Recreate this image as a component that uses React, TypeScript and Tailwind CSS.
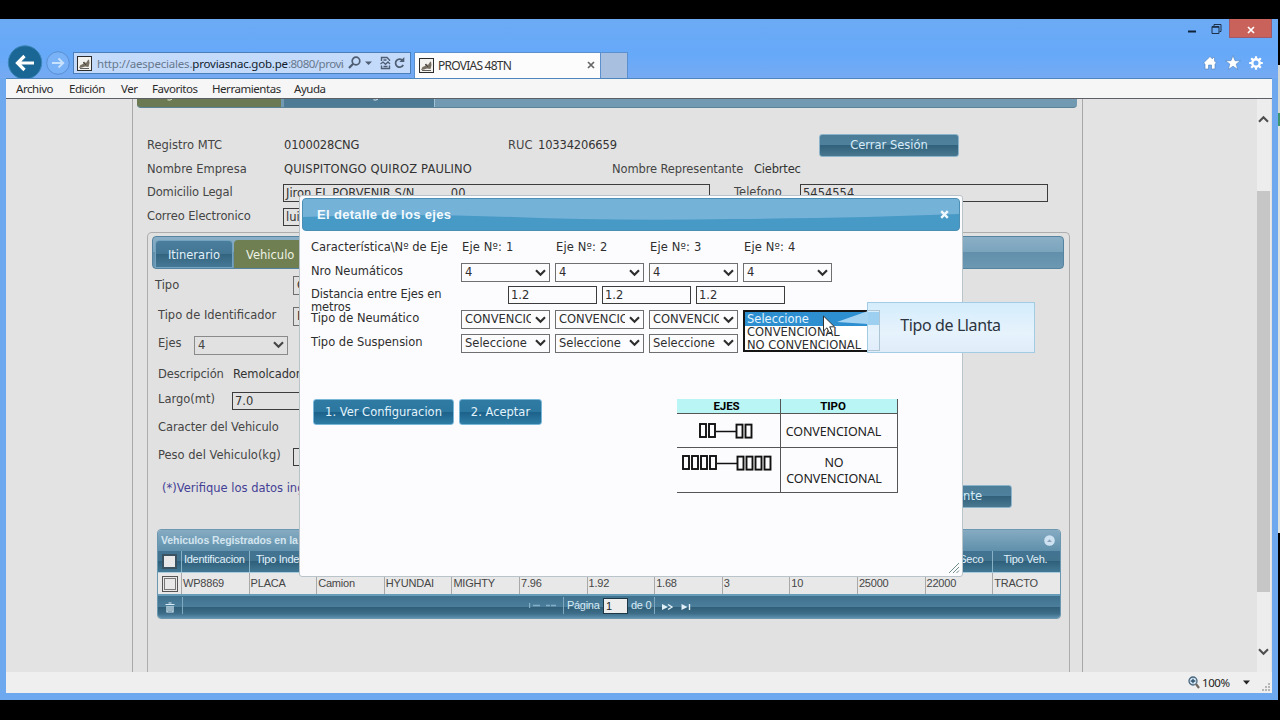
import type { ReactNode } from 'react';
import clsx from 'clsx';

const AXES = [1, 2, 3, 4];

const GRID_ROW = ['WP8869', 'PLACA', 'Camion', 'HYUNDAI', 'MIGHTY', '7.96', '1.92', '1.68', '3', '10', '25000', '22000', 'TRACTO'];
const GRID_HEAD = ['Identificacion', 'Tipo Inden.', 'Clase', 'Marca', 'Modelo', 'Largo', 'Ancho', 'Alto', 'Ejes', 'Llantas', 'Peso Bruto', 'Peso Seco', 'Tipo Veh.'];

const MENU = [
  { label: 'Archivo', className: 'w-[53px]' },
  { label: 'Edición', className: 'w-[52px]' },
  { label: 'Ver', className: 'w-[31px]' },
  { label: 'Favoritos', className: 'w-[60px]' },
  { label: 'Herramientas', className: 'w-[82px]' },
  { label: 'Ayuda', className: 'w-[50px]' },
];

const Favicon = () => (
  <svg width="15" height="15" viewBox="0 0 15 15" className="shrink-0">
    <rect x="0.5" y="0.5" width="14" height="14" fill="#f4f2ee" stroke="#2c2c2c" />
    <path d="M2 12 L3.5 9 L6 8 L7 5.5 L9 7 L11 4 L12 3.5 L12.5 7 L11.5 11 L8 10.5 L5 11.5 Z" fill="#766e60" />
    <path d="M3 12.5 H12 M6 6 L9 9" stroke="#3f3a35" strokeWidth="0.8" />
  </svg>
);

const Chevron = ({ className }: { className?: string }) => (
  <svg width="11" height="8" viewBox="0 0 11 8" className={clsx('shrink-0', className)}>
    <path d="M1 1.2 L5.5 5.8 L10 1.2" fill="none" stroke="currentColor" strokeWidth="2.1" />
  </svg>
);

const Label = ({ className, children }: { className?: string; children: ReactNode }) => (
  <span className={clsx('shrink-0 whitespace-nowrap text-[#454545]', className)}>{children}</span>
);

const Select = ({ value, className }: { value: string; className?: string }) => (
  <div className={clsx('flex h-[19px] w-[89px] shrink-0 items-center border border-[#6f6f6f] pr-[3px] pl-[3px]', className)}>
    <span className="flex-1 overflow-hidden pt-px whitespace-nowrap">{value}</span>
    <Chevron className="ml-[4px]" />
  </div>
);

const TextBox = ({ value, className }: { value: string; className?: string }) => (
  <div className={clsx('flex h-[18px] shrink-0 items-center overflow-hidden border border-[#3c3c3c] pt-[2px] pl-[2px] whitespace-pre', className)}>
    {value}
  </div>
);

const TitleBar = () => (
  <div className="flex h-[59px] shrink-0 flex-col bg-[linear-gradient(#6caaf4,#66a9f9_60%,#76aaf2)]">
    <div className="flex h-[20px] items-start justify-end pr-[6px]">
      <svg width="36" height="20" viewBox="0 0 36 20">
        <path d="M1 12.5 H9" stroke="#10243c" strokeWidth="2" />
        <path d="M25 7.5 H32 V14.5 H25 Z M27 7 V5.5 H34 V12.5 H32.5" fill="none" stroke="#1d3149" />
        <path d="M25 8 H32" stroke="#1d3149" strokeWidth="1.6" />
      </svg>
      <div className="ml-[6px] flex h-[19px] w-[43px] items-center justify-center border border-t-0 border-[#9c5a6c] bg-[#c9625b] pt-[3px]">
        <svg width="8" height="8" viewBox="0 0 8 8">
          <path d="M1 1 L7 7 M7 1 L1 7" stroke="#fff" strokeWidth="1.7" />
        </svg>
      </div>
    </div>
    <div className="flex h-[39px] items-start overflow-hidden">
      <svg width="73" height="39" viewBox="0 0 73 39" className="shrink-0">
        <circle cx="25" cy="23.5" r="16.7" fill="#1a6796" stroke="#3c86b8" />
        <path d="M34 24 H18 M24.5 17 L17.5 24 L24.5 31" fill="none" stroke="#fff" strokeWidth="3.2" />
        <circle cx="58" cy="24" r="11.3" fill="#79b2f7" stroke="#5a8fd2" />
        <path d="M52 24 H63 M58.5 19.5 L63.2 24 L58.5 28.5" fill="none" stroke="#c8e2fd" strokeWidth="1.9" />
      </svg>
      <div className="mt-[13px] flex h-[22px] w-[338px] shrink-0 items-center border border-[#4c7fba] bg-[#c4dafa] pl-[3px]">
        <Favicon />
        <span className="ml-[5px] w-[247px] overflow-hidden pt-px text-[11.5px] tracking-[-0.2px] whitespace-nowrap text-[#67788c]">
          http://aespeciales.<span className="text-[#111c2c]">proviasnac.gob.pe</span>
          <span className="tracking-[-0.5px]">:8080/provias48tn</span>
        </span>
        <svg width="60" height="16" viewBox="0 0 60 16" className="ml-[4px] shrink-0 text-[#4d5d72]">
          <circle cx="8" cy="6" r="3.8" fill="none" stroke="currentColor" strokeWidth="1.7" />
          <path d="M5.2 8.8 L1 13" stroke="currentColor" strokeWidth="2.2" />
          <path d="M17 6.5 H24 L20.5 10 Z" fill="currentColor" />
          <path d="M33.5 6 V2.5 H39 L41.5 5 V6 M33.5 10.5 V13.5 H41.5 V10.5" fill="none" stroke="currentColor" strokeWidth="1.4" />
          <path d="M32.5 9 L35 7 L37.5 9.3 L40 7 L42 9 M35.5 11.5 H39.5 M35.5 5 H38.5" fill="none" stroke="currentColor" strokeWidth="1.3" />
          <path d="M54.7 5.6 A4 4 0 1 0 55.2 9.8" fill="none" stroke="currentColor" strokeWidth="1.7" />
          <path d="M56.3 2 V7 H51.3 Z" fill="currentColor" />
        </svg>
      </div>
      <div className="mt-[13px] ml-[3px] flex h-[26px] w-[187px] shrink-0 items-center border border-b-0 border-[#5c8fce] bg-[#fcfcfc] pl-[4px]">
        <Favicon />
        <span className="ml-[4px] flex-1 text-[12px] tracking-[-0.75px] text-[#333]">PROVIAS 48TN</span>
        <svg width="8" height="8" viewBox="0 0 8 8" className="mr-[5px] mb-[2px]">
          <path d="M1 1 L7 7 M7 1 L1 7" stroke="#666" strokeWidth="1.7" />
        </svg>
      </div>
      <div className="mt-[13px] h-[26px] w-[27px] shrink-0 border border-b-0 border-l-0 border-[#5c8fce] bg-[#a9bfe0]" />
      <svg width="60" height="16" viewBox="0 0 60 16" className="mt-[16px] mr-[15px] ml-auto">
        <path d="M7 1.5 L0.5 8 L2 9 V14 H5.5 V10 H8.5 V14 H12 V9 L13.5 8 L11.5 6 V2.5 H9.5 V4 Z" fill="#fff" stroke="#4d7fb8" strokeWidth="0.6" />
        <path d="M30 0.5 L32 5.7 H37.5 L33.2 9 L34.7 14.5 L30 11.2 L25.3 14.5 L26.8 9 L22.5 5.7 H28 Z" fill="#fff" stroke="#4d7fb8" strokeWidth="0.6" />
        <circle cx="53" cy="8" r="3.7" fill="none" stroke="#fff" strokeWidth="2.4" />
        <path d="M53 1.2 V4 M53 12 V14.8 M46.2 8 H49 M57 8 H59.8 M48.2 3.2 L50 5 M56 11 L57.8 12.8 M57.8 3.2 L56 5 M50 11 L48.2 12.8" stroke="#fff" strokeWidth="2.2" />
      </svg>
    </div>
  </div>
);

const CompanyForm = () => (
  <div className="flex flex-col pt-[26px] pl-[14px]">
    <div className="flex h-[24px] items-center">
      <Label className="w-[137px]">Registro MTC</Label>
      <span className="w-[224px] tracking-[-0.15px]">0100028CNG</span>
      <Label className="w-[30px]">RUC</Label>
      <span className="w-[281px] tracking-[-0.15px]">10334206659</span>
      <div className="-mt-[2px] flex h-[23px] w-[140px] items-center justify-center rounded-[3px] border border-[#8db4cb] bg-[linear-gradient(#4c7d98,#4e819d_48%,#32617c_50%,#48788f)] pt-[2px] text-[#d8ecf8]">
        Cerrar Sesión
      </div>
    </div>
    <div className="flex h-[23px] items-center">
      <Label className="w-[137px]">Nombre Empresa</Label>
      <span className="w-[328px] tracking-[0.15px]">QUISPITONGO QUIROZ PAULINO</span>
      <Label className="w-[142px] tracking-[-0.12px]">Nombre Representante</Label>
      <span className="tracking-[-0.2px]">Ciebrtec</span>
    </div>
    <div className="flex h-[24px] items-center">
      <Label className="w-[136px] tracking-[-0.15px]">Domicilio Legal</Label>
      <TextBox value="Jiron EL PORVENIR S/N          00" className="w-[427px]" />
      <Label className="ml-[24px] w-[66px]">Telefono</Label>
      <TextBox value="5454554" className="w-[248px]" />
    </div>
    <div className="flex h-[23px] items-center">
      <Label className="w-[136px] tracking-[-0.1px]">Correo Electronico</Label>
      <TextBox value="luis" className="w-[427px]" />
    </div>
  </div>
);

const VehicleForm = () => (
  <div className="flex flex-col pl-[10px]">
    <div className="-ml-[3px] flex h-[32px] items-center">
      <Label className="w-[138px] pt-px">Tipo</Label>
      <Select value="Camion" className="w-[120px]" />
    </div>
    <div className="flex h-[29px] items-center">
      <Label className="w-[135px]">Tipo de Identificador</Label>
      <Select value="PLACA" className="mt-[2px] w-[120px]" />
    </div>
    <div className="flex h-[27px] items-center">
      <Label className="w-[36px]">Ejes</Label>
      <Select value="4" className="mt-[3px] w-[94px] border-[#8a8a8a] text-[#444]" />
    </div>
    <div className="flex h-[33px] items-center">
      <Label className="w-[75px] pt-[2px] tracking-[-0.15px]">Descripción</Label>
      <span className="pt-[2px] tracking-[-0.1px]">Remolcador</span>
    </div>
    <div className="flex h-[18px] items-center">
      <Label className="w-[74px] pt-[2px]">Largo(mt)</Label>
      <TextBox value="7.0" className="mt-[3px] w-[110px]" />
    </div>
    <div className="flex h-[38px] items-center">
      <Label className="pt-[2px] tracking-[-0.1px]">Caracter del Vehiculo</Label>
    </div>
    <div className="flex h-[19px] items-center">
      <Label className="w-[135px]">Peso del Vehiculo(kg)</Label>
      <TextBox value="" className="mt-[2px] w-[110px]" />
    </div>
    <div className="flex h-[48px] items-center pl-[4px]">
      <span className="w-[722px] whitespace-nowrap text-[#443f96]">(*)Verifique los datos ingresados</span>
      <div className="mt-[14px] flex h-[23px] w-[128px] shrink-0 items-center justify-end rounded-[3px] border border-[#8db4cb] bg-[linear-gradient(#4c7d98,#4e819d_48%,#32617c_50%,#48788f)] pt-[2px] pr-[29px] text-[#d8ecf8]">
        Siguiente
      </div>
    </div>
  </div>
);

const VehicleGrid = () => (
  <div className="mt-[16px] ml-[9px] flex h-[90px] w-[904px] shrink-0 flex-col overflow-hidden rounded-[4px] border border-[#6c97b0] font-['Liberation_Sans',sans-serif] text-[11px] tracking-[-0.1px]">
    <div className="flex h-[21px] items-center justify-between bg-[linear-gradient(#86abc2,#5f90ab)] pr-[5px] pl-[3px] text-[#d3e5ef]">
      <span className="text-[10.5px] font-bold tracking-[-0.1px]">Vehiculos Registrados en la Solicitud</span>
      <svg width="11" height="11" viewBox="0 0 11 11">
        <circle cx="5.5" cy="5.5" r="5.3" fill="#cfe2f2" />
        <path d="M3 7 L5.5 4.2 L8 7" fill="#8ba4ba" />
      </svg>
    </div>
    <div className="flex h-[22px] shrink-0 border-b border-[#a7cadd] bg-[linear-gradient(#427391,#42738e_48%,#2f607b_50%,#427894)] text-[#e0f1fb]">
      <div className="flex w-[23px] shrink-0 items-center justify-center">
        <div className="h-[15px] w-[15px] border-2 border-[#3b5360] bg-[#e8e8e8]" />
      </div>
      {GRID_HEAD.map((h, i) => (
        <div key={i} className="flex w-[67.6px] shrink-0 items-center justify-center border-l border-[#86b1c7] pr-[2px] pb-[4px] tracking-[-0.25px] whitespace-nowrap">
          {h}
        </div>
      ))}
    </div>
    <div className="flex h-[21px] shrink-0 bg-[#e8e8e8] text-[#464646]">
      <div className="flex w-[23px] shrink-0 items-center justify-center">
        <div className="flex h-[16px] w-[16px] items-center justify-center border border-[#555]">
          <div className="h-[12px] w-[12px] border border-[#777]" />
        </div>
      </div>
      {GRID_ROW.map((c, i) => (
        <div key={i} className="flex w-[67.6px] shrink-0 items-center border-l border-[#a9a9a9] pb-px pl-[1px] tracking-[-0.2px]">
          {c}
        </div>
      ))}
    </div>
    <div className="flex flex-1 items-center border-t-2 border-[#669cb8] bg-[linear-gradient(#3f718d,#4b7e9b_48%,#305e78_50%,#3d6d88_80%,#5d91b0)] pb-[3px] text-[#d7ebf6]">
      <svg width="10" height="11" viewBox="0 0 10 11" className="mt-[3px] ml-[7px]">
        <path d="M0.5 2.5 H9.5 M3.5 1 H6.5 M2 4 V10 H8 V4 M4 4 V9 M6 4 V9" fill="none" stroke="#d9ecf6" strokeWidth="1.2" />
      </svg>
      <div className="ml-[7px] h-[17px] w-px bg-[#7fa9c0]" />
      <svg width="28" height="7" viewBox="0 0 28 7" className="ml-[346px]">
        <path d="M0.5 1 V6 M4 3.5 H11 M17 3.5 H21 M22 3.5 H27" stroke="#82aec8" strokeWidth="1.4" />
      </svg>
      <div className="ml-[6px] h-[17px] w-px bg-[#7fa9c0]" />
      <span className="ml-[3px] w-[36px] tracking-[-0.3px]">Página</span>
      <span className="h-[16px] w-[25px] border border-[#1e3746] bg-[#ededed] pl-[2px] leading-[14px] text-[#222]">1</span>
      <span className="ml-[3px] w-[23px] tracking-[-0.3px]">de 0</span>
      <div className="h-[17px] w-px bg-[#7fa9c0]" />
      <svg width="32" height="8" viewBox="0 0 32 8" className="mt-[2px] ml-[6px]">
        <path d="M1 1 L7 4 L1 7 Z M20.5 1 L26.5 4 L20.5 7 Z" fill="#e1f0f8" />
        <path d="M7 1.5 L11 4 L7 6.5 M28.5 1 V7" fill="none" stroke="#e1f0f8" strokeWidth="1.4" />
      </svg>
    </div>
  </div>
);

const DialogRow = ({ label, className, children }: { label: ReactNode; className?: string; children: ReactNode }) => (
  <div className={clsx('flex items-center', className)}>
    <div className="w-[150px] shrink-0 leading-[13px]">{label}</div>
    {children}
  </div>
);

// Two axle drawings with `n` wheels at each end
const Wheels = ({ n }: { n: number }) => {
  const side = n * 9;
  return (
    <svg width={side * 2 + 21} height="16" viewBox={`0 0 ${side * 2 + 21} 16`}>
      {Array.from({ length: n }, (_, i) => (
        <g key={i} fill="none" stroke="#111" strokeWidth="1.9">
          <rect x={i * 9 + 1} y="1" width="6" height="13" />
          <rect x={side + 19.5 + i * 9} y="1.6" width="6" height="13" />
        </g>
      ))}
      <path d={`M${side - 1} 8.5 H${side + 19}`} stroke="#111" strokeWidth="1.5" />
    </svg>
  );
};

const DialogButton = ({ className, children }: { className: string; children: ReactNode }) => (
  <div className={clsx('flex h-[26px] items-center justify-center rounded-[3px] border border-[#79b7d8] bg-[linear-gradient(#2f7ba3,#2c77a0_48%,#1c618a_50%,#2e7ca5)] pt-[2px] font-medium text-[#e2f3fc]', className)}>
    {children}
  </div>
);

const AxesDialog = () => (
  <div className="absolute top-[96px] left-[293px] z-10 flex h-[382px] w-[664px] flex-col rounded-[3px] border border-[#b9c3ca] bg-[#fcfcfe] p-[2px] text-[#2e2e2e]">
    <div className="relative flex h-[33px] shrink-0 items-center justify-between overflow-hidden rounded-[4px] border border-[#4b8fb4] bg-[#4799c6] pr-[10px] pl-[14px]">
      <svg width="658" height="33" viewBox="0 0 658 33" preserveAspectRatio="none" className="absolute inset-0">
        <path d="M0 0 H658 V15 Q560 19 430 20 Q310 22 210 18 Q100 14 0 18 Z" fill="#74b2d8" />
      </svg>
      <span className="relative font-['Liberation_Sans',sans-serif] text-[13px] font-bold tracking-[0.33px] text-[#f2faff]">El detalle de los ejes</span>
      <svg width="9" height="9" viewBox="0 0 9 9" className="relative">
        <path d="M1.2 1.2 L7.8 7.8 M7.8 1.2 L1.2 7.8" stroke="#eef8fd" strokeWidth="2.4" />
      </svg>
    </div>

    <div className="flex flex-col pt-[4px] pl-[9px]">
      <DialogRow label={<span className="whitespace-nowrap">Característica\Nº de Eje</span>} className="h-[24px]">
        {AXES.map((n) => (
          <span key={n} className="w-[94px] pt-[2px] pl-px tracking-[0.15px]">Eje Nº: {n}</span>
        ))}
      </DialogRow>
      <DialogRow label="Nro Neumáticos" className="h-[24px]">
        <div className="flex gap-[5px] pt-[3px]">
          {AXES.map((n) => <Select key={n} value="4" />)}
        </div>
      </DialogRow>
      <div className="flex h-[23px]">
        <div className="w-[197px] pt-[5px] leading-[13px] tracking-[-0.1px]">Distancia entre Ejes en<br />metros</div>
        <div className="flex gap-[5px] pt-[3px]">
          {AXES.slice(1).map((n) => <TextBox key={n} value="1.2" className="w-[89px]" />)}
        </div>
      </div>
      <DialogRow label="Tipo de Neumático" className="h-[24px]">
        <div className="flex gap-[5px] pt-[3px]">
          {AXES.slice(1).map((n) => <Select key={n} value="CONVENCIONAL" />)}
        </div>
      </DialogRow>
      <DialogRow label="Tipo de Suspension" className="h-[24px]">
        <div className="flex gap-[5px] pt-[2px]">
          {AXES.slice(1).map((n) => <Select key={n} value="Seleccione" />)}
        </div>
      </DialogRow>
    </div>

    <div className="mt-[45px] flex items-start pl-[11px]">
      <DialogButton className="w-[141px]">1. Ver Configuracion</DialogButton>
      <DialogButton className="ml-[5px] w-[83px]">2. Aceptar</DialogButton>
      <div className="ml-[135px] grid w-[221px] grid-cols-[103px_118px] font-['Noto_Sans',sans-serif] text-[12.5px] tracking-[-0.1px] text-[#222]">
        <div className="flex h-[15px] items-center justify-center border-b border-[#555] bg-[#b9f5f4] pt-px pr-1 font-['Roboto',sans-serif] text-[11.5px] font-bold text-black">EJES</div>
        <div className="flex h-[15px] items-center justify-center border-r border-b border-l border-[#555] bg-[#b9f5f4] pt-px pr-3 font-['Roboto',sans-serif] text-[11.5px] font-bold text-black">TIPO</div>
        <div className="flex h-[34px] items-center justify-center border-b border-[#555] pr-[3px]"><Wheels n={2} /></div>
        <div className="flex h-[34px] items-center justify-center border-r border-b border-l border-[#555] pt-[3px] pr-[11px]">CONVENCIONAL</div>
        <div className="flex h-[45px] items-start justify-center border-b border-[#555] pt-[7px]"><Wheels n={4} /></div>
        <div className="flex h-[45px] items-center justify-center border-r border-b border-l border-[#555] pt-[2px] pr-[10px] text-center leading-[16px]">NO<br />CONVENCIONAL</div>
      </div>
    </div>

    <svg width="12" height="12" viewBox="0 0 12 12" className="mt-auto ml-auto">
      <path d="M1 11 L11 1 M5 11 L11 5 M8.5 11 L11 8.5" stroke="#6f8f8a" strokeWidth="1" />
    </svg>

    <div className="absolute top-[114px] left-[443px] h-[42px] w-[137px] border-2 border-[#151515] bg-white leading-[13px]">
      <div className="h-[14px] bg-[#2d8fd0] pl-[2px] leading-[14px] text-[#e6f5ff]">Seleccione</div>
      <div className="h-[13px] pl-[2px]">CONVENCIONAL</div>
      <div className="h-[13px] pl-[2px] whitespace-nowrap">NO CONVENCIONAL</div>
    </div>
  </div>
);

const Tooltip = () => (
  <>
    <div className="absolute top-[203px] left-[861px] z-20 flex h-[51px] w-[168px] items-center justify-center border border-[#a3cbe3] bg-[linear-gradient(#d4edfc,#e6f2fc_60%,#e0ecf8)] pr-px pb-[6px] font-['Noto_Sans',sans-serif] text-[16px] tracking-[-0.4px] text-[#2c3440]">
      Tipo de Llanta
      <div className="absolute top-[7px] left-0 h-[41px] w-[12px] border border-l-0 border-[#adc5d4]" />
      <div className="absolute top-[9px] left-0 h-[13px] w-[11px] bg-[#9dd0f0]" />
    </div>
    <svg width="52" height="30" viewBox="0 0 52 30" className="absolute top-[208px] left-[815px] z-20">
      <path d="M47 4 L16 15 L47 17 Z" fill="#a5d4f3" />
      <path d="M2.5 9 V24 L6 20.8 L8.4 26 L11 24.8 L8.7 19.8 H13.5 Z" fill="#fff" stroke="#333" />
    </svg>
  </>
);

const App = () => (
  <div className="flex h-[720px] w-[1280px] flex-col overflow-hidden bg-black pt-[19px] font-['Noto_Sans',sans-serif]">
    <div className="flex h-[681px]">
      <div className="flex w-[1278px] flex-col bg-[#6ea8ee]">
        <TitleBar />
        <div className="mx-[6px] flex h-[21px] shrink-0 items-center border-t border-b border-t-[#4d86bd] border-b-[#5c6065] bg-[#f6f6f6] pl-[10px] text-[11.5px] tracking-[-0.45px] text-[#2b2b2b]">
          {MENU.map((m) => (
            <span key={m.label} className={clsx('shrink-0 whitespace-nowrap', m.className)}>{m.label}</span>
          ))}
        </div>

        <div className="relative mx-[6px] flex h-[573px] shrink-0 bg-[#e3e3e3] font-['DejaVu_Sans',sans-serif] text-[11.5px] text-[#333]">
          <div className="ml-[126px] flex w-[951px] flex-col border-x border-[#a8a8a8] bg-[#e2e2e2]">
            <div className="ml-[4px] flex h-[9px] w-[940px] shrink-0 overflow-hidden rounded-b-[4px] border-b border-[#5c8298] bg-[#7199b1]">
              <div className="w-[144px] bg-[#6b7a52]">
                <svg width="6" height="3" viewBox="0 0 6 3" className="ml-[30px]">
                  <path d="M0.5 0.8 Q3 1.8 5 0" fill="none" stroke="#e9eedd" />
                </svg>
              </div>
              <div className="ml-[3px] w-[151px] border-r border-[#a3c3d5] bg-[#4d7b96]">
                <svg width="6" height="3" viewBox="0 0 6 3" className="ml-[89px]">
                  <path d="M0.5 0.8 Q3 1.8 5 0" fill="none" stroke="#dcebf5" />
                </svg>
              </div>
            </div>
            <CompanyForm />
            <div className="mt-[4px] ml-[14px] flex w-[923px] flex-1 flex-col rounded-t-[5px] border border-b-0 border-[#adadad] bg-[#e1e1e1] pt-[3px]">
              <div className="ml-[4px] flex h-[33px] w-[912px] shrink-0 items-end rounded-[4px] border border-[#5484a0] bg-[linear-gradient(#8aafc6,#7ba4bd_48%,#628fab_50%,#6c98b2)] pl-[2px]">
                <div className="flex h-[28px] w-[78px] items-center justify-center rounded-t-[4px] border border-[#74a3bf] bg-[linear-gradient(#4a7e9d,#437693_48%,#33647f_50%,#457895)] pt-[4px] text-[#e3f1f9]">Itinerario</div>
                <div className="ml-[1px] flex h-[28px] w-[90px] items-center rounded-t-[4px] bg-[#6f7f52] pt-[4px] pl-[12px] text-[#eef2e4]">Vehiculo</div>
              </div>
              <VehicleForm />
              <VehicleGrid />
            </div>
          </div>

          <div className="mr-[1px] ml-auto flex w-[14px] flex-col items-center bg-[#ededed] pr-px text-[#505050]">
            <Chevron className="mt-[16px] rotate-180" />
            <div className="mt-[68px] h-[401px] w-full bg-[#c6c6c6]" />
            <Chevron className="mt-[56px]" />
          </div>

          <AxesDialog />
          <Tooltip />
        </div>

        <div className="mx-[6px] flex h-[21px] shrink-0 items-center justify-end bg-[#efefef] text-[11.5px] tracking-[-0.4px] text-[#222]">
          <svg width="12" height="13" viewBox="0 0 12 13">
            <circle cx="5" cy="5" r="4" fill="#d6e6f2" stroke="#49677f" strokeWidth="1.3" />
            <path d="M5 2.7 V7.3 M2.7 5 H7.3" stroke="#2c516c" strokeWidth="1.3" />
            <path d="M8 8 L11 12" stroke="#6f6a62" strokeWidth="2.2" />
          </svg>
          <span className="ml-[2px] w-[41px]">100%</span>
          <svg width="7" height="5" viewBox="0 0 7 5">
            <path d="M0 0.5 H7 L3.5 4.5 Z" fill="#222" />
          </svg>
          <svg width="9" height="9" viewBox="0 0 9 9" className="mt-[10px] mr-[1px] ml-[12px]">
            <path d="M6 0 h2 v2 h-2 Z M3 3 h2 v2 h-2 Z M6 3 h2 v2 h-2 Z M0 6 h2 v2 h-2 Z M3 6 h2 v2 h-2 Z M6 6 h2 v2 h-2 Z" fill="#b5b5b5" />
          </svg>
        </div>
      </div>

      {/* sliver of the desktop behind the window */}
      <div className="flex flex-1 flex-col pt-[46px]">
        <div className="h-[48px] bg-[#d5d9d6]" />
        <div className="h-[13px] bg-[#3f9472]" />
        <div className="h-[407px] bg-[#dfe3e0]" />
      </div>
    </div>
  </div>
);

export default App;
